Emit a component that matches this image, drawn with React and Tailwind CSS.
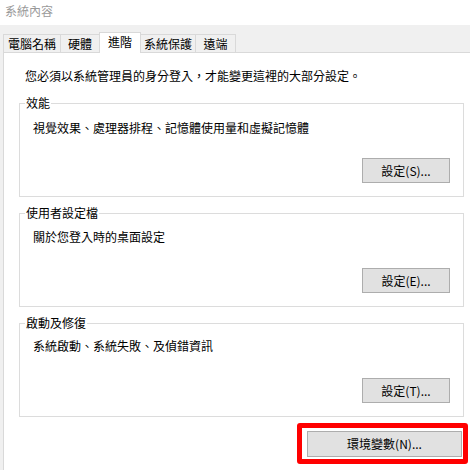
import React from 'react';

const tabs = ['電腦名稱', '硬體', '進階', '系統保護', '遠端'];

const groups = [
  { title: '效能', desc: '視覺效果、處理器排程、記憶體使用量和虛擬記憶體', button: '設定(S)...', descTop: 'mt-[9px]', btnTop: 'mt-[22px]' },
  { title: '使用者設定檔', desc: '關於您登入時的桌面設定', button: '設定(E)...', descTop: 'mt-[8px]', btnTop: 'mt-[23px]' },
  { title: '啟動及修復', desc: '系統啟動、系統失敗、及偵錯資訊', button: '設定(T)...', descTop: 'mt-[7px]', btnTop: 'mt-[24px]' },
];

function WinButton({ children, className = '' }) {
  return (
    <button
      type="button"
      className={`h-[25px] bg-[#e1e1e1] border border-[#adadad] text-[12px] leading-[16px] text-black flex items-center justify-center ${className}`}
    >
      {children}
    </button>
  );
}

export default function App() {
  return (
    <div
      className="w-[470px] h-[470px] overflow-hidden bg-[#f0f0f0] flex flex-col text-black"
      style={{ fontFamily: '"Noto Sans CJK TC", "Noto Sans", sans-serif' }}
    >
      {/* title bar */}
      <div className="h-[25px] shrink-0 bg-white pl-[5px] pt-[3px] text-[12px] leading-[16px] text-[#9a9a9a]">
        系統內容
      </div>

      {/* tab strip */}
      <div className="h-[27px] shrink-0 flex items-end pl-[3px]">
        {tabs.map((t, i) =>
          i === 2 ? (
            <div
              key={t}
              className="relative z-10 -mb-px h-[21px] w-[42px] -ml-px bg-white border border-b-0 border-[#d9d9d9] text-[12px] leading-[16px] flex items-center justify-center pb-[2px]"
            >
              {t}
            </div>
          ) : (
            <div
              key={t}
              className={`h-[18px] ${i === 0 ? 'w-[58px]' : i === 1 ? 'w-[40px] -ml-px' : i === 3 ? 'w-[56px] -ml-px' : 'w-[41px] -ml-px'} bg-[#f0f0f0] border border-b-0 border-[#d9d9d9] text-[12px] leading-[16px] flex items-center justify-center`}
            >
              {t}
            </div>
          )
        )}
      </div>

      {/* tab panel */}
      <div className="flex-1 ml-[3px] bg-white border-t border-l border-[#d9d9d9] flex flex-col pt-[15px]">
        <p className="ml-[21px] text-[12px] leading-[16px]">
          您必須以系統管理員的身分登入，才能變更這裡的大部分設定。
        </p>

        {groups.map((g, i) => (
          <fieldset
            key={g.title}
            className={`${i === 0 ? 'mt-[11px]' : 'mt-[8px]'} ml-[15px] w-[445px] border border-[#dcdcdc] px-0 pb-[13px] flex flex-col`}
          >
            <legend className="ml-[5px] px-[1px] text-[12px] leading-[16px]">{g.title}</legend>
            <p className={`${g.descTop} ml-[13px] text-[12px] leading-[16px]`}>{g.desc}</p>
            <div className={`${g.btnTop} flex justify-end pr-[13px]`}>
              <WinButton className="w-[88px]">{g.button}</WinButton>
            </div>
          </fieldset>
        ))}

        <div className="mt-[6px] flex justify-end pr-[2px]">
          <div className="border-[5px] border-[#ff0000] rounded-[3px] pl-[5px] pt-[3px] pb-[2px] pr-[1px]">
            <WinButton className="w-[155px] h-[26px]">環境變數(N)...</WinButton>
          </div>
        </div>
      </div>
    </div>
  );
}
